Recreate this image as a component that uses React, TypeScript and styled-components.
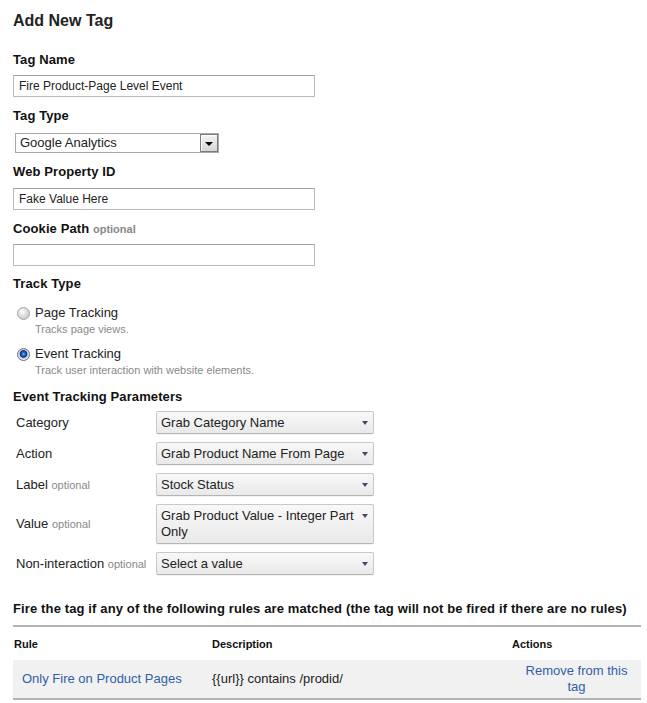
import React from 'react';
import styled, { createGlobalStyle } from 'styled-components';

const GlobalStyle = createGlobalStyle`
  html, body { margin: 0; padding: 0; background: #fff; }
  body { font-family: "Liberation Sans", Arial, sans-serif; color: #222; }
  * { box-sizing: border-box; }
`;

const Page = styled.div`
  width: 647px;
  padding: 11px 6px 0 13px;
`;

const Title = styled.h1`
  margin: 0;
  font-size: 16px;
  line-height: 20px;
  font-weight: bold;
  color: #222;
`;

const FieldLabel = styled.div<{ $mt: number }>`
  margin-top: ${p => p.$mt}px;
  font-size: 13px;
  line-height: 16px;
  font-weight: bold;
  letter-spacing: 0.1px;
  color: #111;
`;

const Optional = styled.span<{ $bold?: boolean }>`
  font-size: 11px;
  letter-spacing: 0;
  color: #888;
  font-weight: ${p => (p.$bold ? 'bold' : 'normal')};
`;

const TextBox = styled.div<{ $mt: number }>`
  margin-top: ${p => p.$mt}px;
  width: 302px;
  height: 22px;
  border: 1px solid #b8b8b8;
  border-top-color: #a0a0a0;
  padding: 0 5px;
  font-size: 12px;
  line-height: 20px;
  color: #222;
  background: #fff;
`;

const NativeSelect = styled.div`
  margin: 9px 0 0 2px;
  width: 204px;
  height: 20px;
  display: flex;
  border: 1px solid #a9a9a9;
  background: #fff;
`;

const NativeSelectText = styled.div`
  flex: 1;
  padding-left: 4px;
  font-size: 13px;
  line-height: 18px;
  color: #222;
`;

const NativeSelectButton = styled.div`
  width: 18px;
  height: 18px;
  border: 1px solid #7c7c7c;
  box-shadow: inset 1px 1px 0 #fff;
  background: linear-gradient(#f3f3f3, #d6d6d6);
  display: flex;
  align-items: center;
  justify-content: center;
`;

const BlackTriangle = styled.div`
  width: 0;
  height: 0;
  border-left: 4px solid transparent;
  border-right: 4px solid transparent;
  border-top: 4px solid #000;
  margin-top: 1px;
`;

const RadioOption = styled.div<{ $mt: number }>`
  margin-top: ${p => p.$mt}px;
  display: flex;
  align-items: flex-start;
  gap: 5px;
  padding-left: 4px;
`;

const Radio = styled.div<{ $checked?: boolean }>`
  flex: none;
  width: 13px;
  height: 13px;
  margin-top: 2px;
  border-radius: 50%;
  border: 1px solid ${p => (p.$checked ? '#5c6e8c' : '#a2a2a2')};
  background: ${p =>
    p.$checked
      ? 'radial-gradient(circle at 50% 45%, #7fb8f5 0, #2a6fc9 1.5px, #0d3477 3.4px, #c9ccd2 4.2px, #eef0f2 6px)'
      : 'radial-gradient(circle at 40% 35%, #ffffff 0, #f0f0f0 2px, #d2d2d2 6px)'};
`;

const RadioTexts = styled.div`
  display: flex;
  flex-direction: column;
`;

const RadioLabel = styled.div`
  font-size: 13px;
  line-height: 16px;
  color: #222;
`;

const RadioHint = styled.div`
  margin-top: 1px;
  font-size: 11px;
  line-height: 14px;
  color: #8a8a8a;
`;

const ParamsGrid = styled.div`
  margin-top: 6px;
  display: grid;
  grid-template-columns: 143px 218px;
  row-gap: 8px;
  align-items: center;
`;

const ParamLabel = styled.div`
  padding-left: 3px;
  font-size: 13px;
  line-height: 16px;
  color: #222;
`;

const MenuButton = styled.div<{ $tall?: boolean }>`
  width: 218px;
  display: flex;
  align-items: flex-start;
  justify-content: space-between;
  gap: 6px;
  padding: 3px 5px ${p => (p.$tall ? 3 : 2)}px 4px;
  border: 1px solid #c8c8c8;
  border-bottom-color: #b4b4b4;
  border-radius: 2px;
  background: linear-gradient(#f8f8f8, #e9e9e9);
  box-shadow: 0 1px 0 rgba(0, 0, 0, 0.05);
  font-size: 13px;
  line-height: 16px;
  color: #222;
`;

const MenuArrow = styled.div`
  flex: none;
  width: 0;
  height: 0;
  margin-top: 6px;
  border-left: 3.5px solid transparent;
  border-right: 3.5px solid transparent;
  border-top: 4px solid #3d4c6b;
`;

const RulesHeading = styled.div`
  margin-top: 26px;
  font-size: 13px;
  line-height: 16px;
  font-weight: bold;
  letter-spacing: 0.13px;
  color: #111;
`;

const Table = styled.div`
  margin-top: 8px;
  width: 628px;
  border-top: 2px solid #b4b4b4;
`;

const TableRow = styled.div<{ $body?: boolean }>`
  display: grid;
  grid-template-columns: 199px 300px 129px;
  align-items: center;
  min-height: ${p => (p.$body ? '38px' : '33px')};
  padding: ${p => (p.$body ? '3px 0' : '0')};
  background: ${p => (p.$body ? '#f1f1f1' : 'transparent')};
  border-bottom: ${p => (p.$body ? '2px solid #b4b4b4' : 'none')};
`;

const HeadCell = styled.div<{ $pl?: number }>`
  padding-left: ${p => p.$pl ?? 0}px;
  font-size: 11px;
  font-weight: bold;
  line-height: 14px;
  color: #111;
`;

const Cell = styled.div<{ $pl?: number; $center?: boolean }>`
  padding: 0 ${p => (p.$center ? 12 : 0)}px 0 ${p => p.$pl ?? (p.$center ? 12 : 0)}px;
  text-align: ${p => (p.$center ? 'center' : 'left')};
  font-size: 13px;
  line-height: 16px;
  color: #222;
`;

const Link = styled.a`
  color: #2f5fa8;
  text-decoration: none;
  cursor: pointer;
`;

const params: { label: string; optional?: boolean; value: string }[] = [
  { label: 'Category', value: 'Grab Category Name' },
  { label: 'Action', value: 'Grab Product Name From Page' },
  { label: 'Label', optional: true, value: 'Stock Status' },
  { label: 'Value', optional: true, value: 'Grab Product Value - Integer Part Only' },
  { label: 'Non-interaction', optional: true, value: 'Select a value' },
];

export default function App() {
  return (
    <>
      <GlobalStyle />
      <Page>
        <Title>Add New Tag</Title>

        <FieldLabel $mt={21}>Tag Name</FieldLabel>
        <TextBox $mt={7}>Fire Product-Page Level Event</TextBox>

        <FieldLabel $mt={11}>Tag Type</FieldLabel>
        <NativeSelect>
          <NativeSelectText>Google Analytics</NativeSelectText>
          <NativeSelectButton>
            <BlackTriangle />
          </NativeSelectButton>
        </NativeSelect>

        <FieldLabel $mt={11}>Web Property ID</FieldLabel>
        <TextBox $mt={8}>Fake Value Here</TextBox>

        <FieldLabel $mt={11}>
          Cookie Path <Optional $bold>optional</Optional>
        </FieldLabel>
        <TextBox $mt={7} />

        <FieldLabel $mt={10}>Track Type</FieldLabel>
        <RadioOption $mt={13}>
          <Radio />
          <RadioTexts>
            <RadioLabel>Page Tracking</RadioLabel>
            <RadioHint>Tracks page views.</RadioHint>
          </RadioTexts>
        </RadioOption>
        <RadioOption $mt={10}>
          <Radio $checked />
          <RadioTexts>
            <RadioLabel>Event Tracking</RadioLabel>
            <RadioHint>Track user interaction with website elements.</RadioHint>
          </RadioTexts>
        </RadioOption>

        <FieldLabel $mt={12}>Event Tracking Parameters</FieldLabel>
        <ParamsGrid>
          {params.map(p => (
            <React.Fragment key={p.label}>
              <ParamLabel>
                {p.label}
                {p.optional && <> <Optional>optional</Optional></>}
              </ParamLabel>
              <MenuButton $tall={p.value.length > 30}>
                <span>{p.value}</span>
                <MenuArrow />
              </MenuButton>
            </React.Fragment>
          ))}
        </ParamsGrid>

        <RulesHeading>
          Fire the tag if any of the following rules are matched (the tag will not be fired if there are no rules)
        </RulesHeading>
        <Table>
          <TableRow>
            <HeadCell $pl={1}>Rule</HeadCell>
            <HeadCell>Description</HeadCell>
            <HeadCell>Actions</HeadCell>
          </TableRow>
          <TableRow $body>
            <Cell $pl={9}>
              <Link>Only Fire on Product Pages</Link>
            </Cell>
            <Cell>{'{{url}} contains /prodid/'}</Cell>
            <Cell $center>
              <Link>Remove from this tag</Link>
            </Cell>
          </TableRow>
        </Table>
      </Page>
    </>
  );
}
